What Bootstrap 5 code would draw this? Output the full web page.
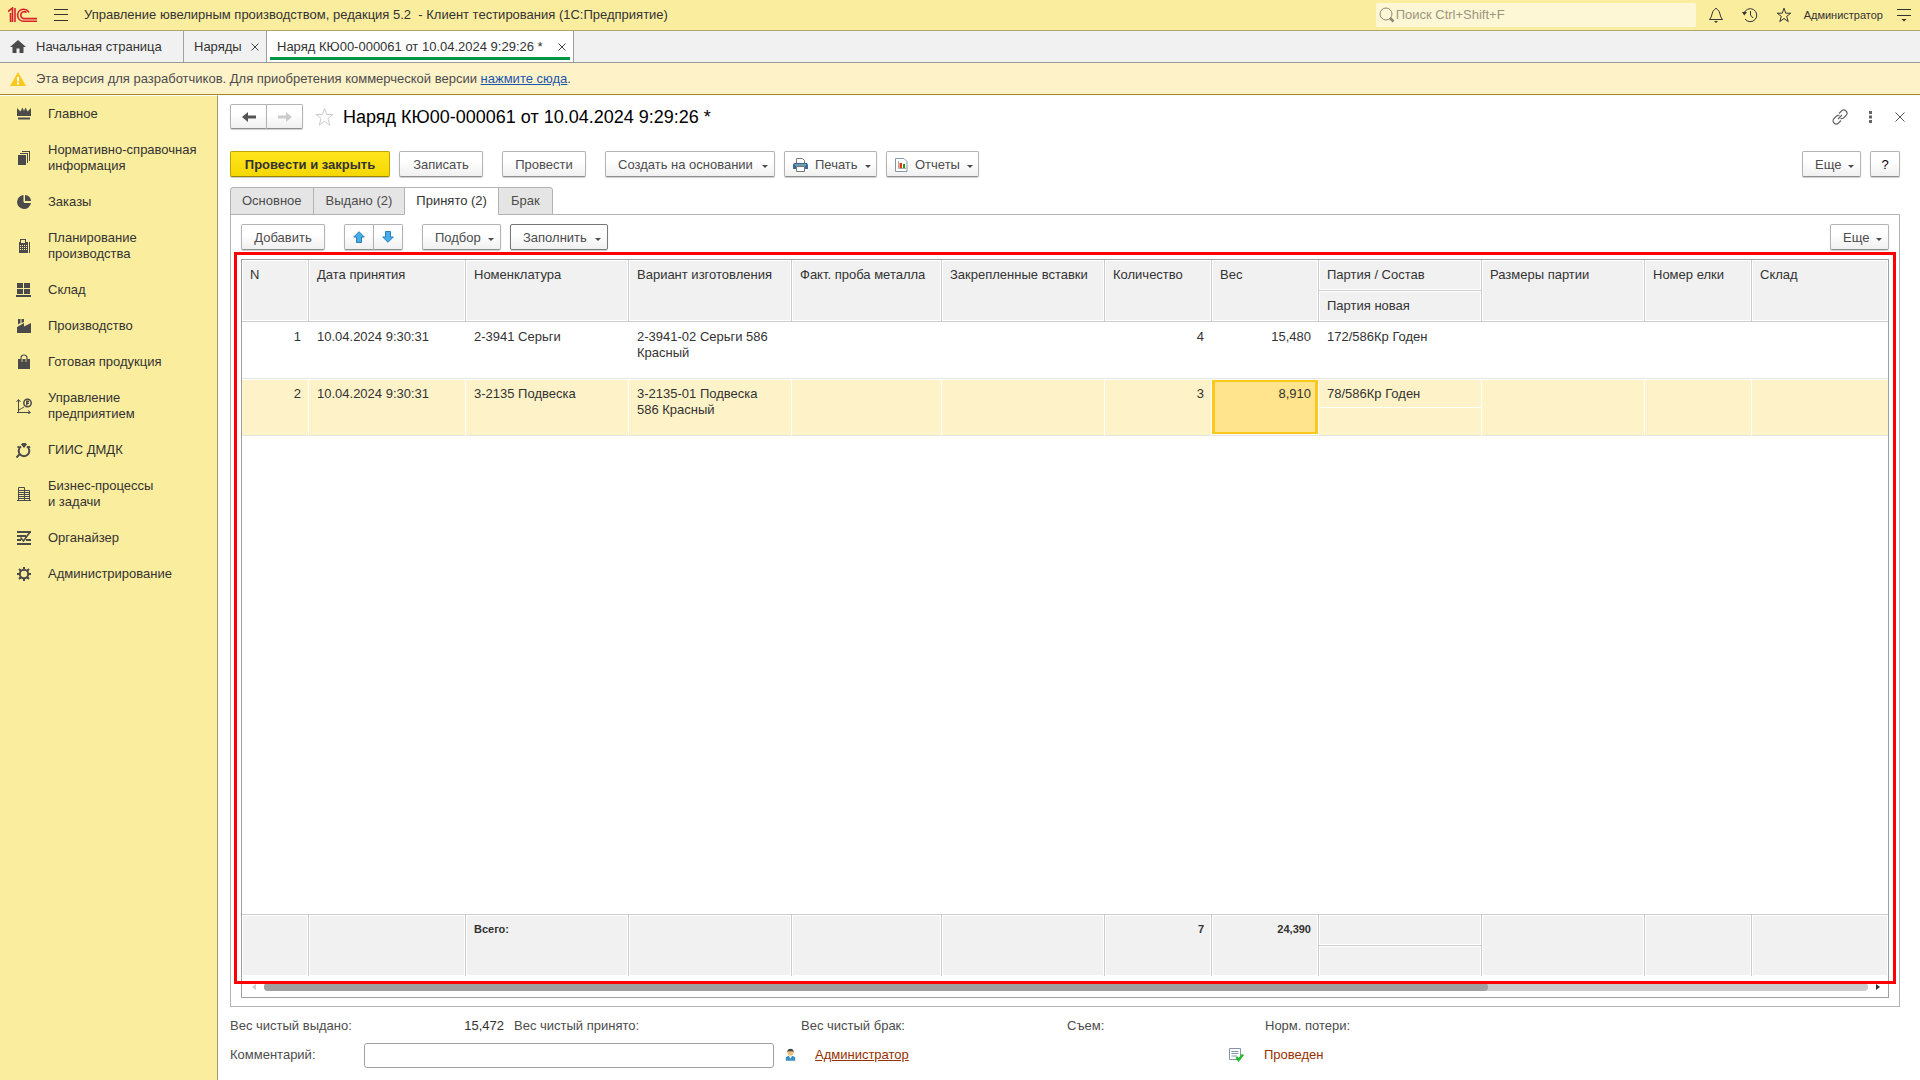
<!DOCTYPE html>
<html lang="ru">
<head>
<meta charset="utf-8">
<meta name="viewport" content="width=device-width, initial-scale=1">
<title>Управление ювелирным производством, редакция 5.2</title>
<link rel="stylesheet" href="https://cdn.jsdelivr.net/npm/bootstrap@5.3.0/dist/css/bootstrap.min.css">
<style>
  body { font-family: "Liberation Sans", Arial, sans-serif; font-size: 13px; line-height: 16px; color: #333; background: #fff; }
  button, input { font: inherit; color: inherit; }
  svg { display: block; flex: none; }
  .bare { border: 0; background: none; padding: 0; display: flex; align-items: center; justify-content: center; }
  .body-area, .work { min-height: 0; min-width: 0; }

  .topbar { height: 31px; background: #fbed9e; border-bottom: 1px solid #aea66f; padding: 0 9px 0 8px; }
  .search-box { width: 320px; height: 24px; background: #fef7d6; border-radius: 2px; padding-left: 3px; color: #8d8873; }
  .search-box input { border: 0; background: none; outline: 0; padding: 0; min-width: 0; }
  .search-box input::placeholder { color: #9b967c; opacity: 1; }
  .top-icons { gap: 18px; margin: 0 12px; }
  .user-name { font-size: 11px; color: #333; text-decoration: none; margin-right: 14px; }

  .window-tabs { height: 32px; background: #f1f1f1; border-bottom: 1px solid #999; }
  .window-tab { height: 31px; border-right: 1px solid #a0a0a0; padding: 0 7px 0 10px; color: #333; }
  .window-tab a { color: inherit; text-decoration: none; }
  .tab-home { width: 184px; gap: 10px; }
  .tab-list { width: 83px; }
  .tab-doc { width: 307px; background: #fff; padding: 0 3px; }
  .tab-doc > div { border-bottom: 3px solid #009646; height: 29px; padding: 5px 4px 0 7px; }

  .notice { height: 32px; background: #fef2c8; border-bottom: 1px solid #a18a20; padding-left: 10px; gap: 10px; color: #4c4c4c; }
  .notice a { color: #1c55ae; }

  .sidebar { width: 218px; background: #fbed9e; border-right: 1px solid #9f9769; border-top: 1px solid #fff; }
  .sidebar a { display: flex; align-items: center; color: #333; text-decoration: none; padding: 10px 0 10px 16px; gap: 16px; }
  .sidebar svg { fill: #4a4a4a; stroke: none; }
  .sidebar .ln { fill: none; stroke: #4a4a4a; }

  .work { padding: 9px 20px 0 12px; }
  .doc-star { margin: 0 9px 0 12px; }
  .doc-title { font-size: 18px; line-height: 24px; color: #000; margin: 0; font-weight: 400; }
  .doc-tools { gap: 10px; margin-right: -10px; }
  .doc-tools .bare { width: 20px; height: 20px; }
  .command-row { margin-top: 22px; gap: 9px; }
  .tool-row { gap: 9px; }
  .spaced { margin-left: 10px; }
  .cmd { height: 26px; display: inline-flex; align-items: center; justify-content: center; border: 1px solid #b3b3b3; border-bottom-color: #8f8f8f; border-radius: 2px; background: linear-gradient(#fff 40%, #f0f0f0); box-shadow: 0 1px 1px #ccc; color: #4c4c4c; padding: 1px 12px 0; white-space: nowrap; }
  .cmd-main { background: linear-gradient(#ffe51e, #f5d700); border-color: #bfa300; border-bottom-color: #998300; color: #333; font-weight: 700; width: 160px; }
  .cmd-drop { justify-content: flex-start; padding: 1px 6px 0 12px; gap: 7px; }
  .cmd-icon { padding-left: 8px; }
  .cmd-drop::after { content: ""; border: 3px solid transparent; border-top-color: #4c4c4c; border-bottom: 0; margin: 3px 0 0 auto; }
  .cmd-focus { border-color: #777; }
  .cmd-nav { height: 25px; width: 37px; padding: 0; }
  .cmd-arrow { width: 30px; padding: 0; }
  .cmd-more { width: 59px; gap: 0; }
  .cmd-help { width: 30px; color: #000; }
  .w-a { width: 84px; }
  .w-b { width: 170px; }
  .w-c { width: 93px; }
  .w-d { width: 79px; }
  .w-e { width: 98px; }
  .joined .cmd:first-child { border-radius: 2px 0 0 2px; }
  .joined .cmd:last-child { border-radius: 0 2px 2px 0; margin-left: -1px; }

  .page-tabs { margin: 10px 0 -1px; position: relative; }
  .page-tab { height: 28px; border: 1px solid #b3b3b3; background: #e5e5e5; padding: 0 12px; margin-right: -1px; color: #4c4c4c; }
  .page-tab:first-child { border-radius: 3px 0 0 0; padding: 0 11px; }
  .page-tab:last-child { border-radius: 0 3px 0 0; }
  .page-tab.current { background: #fff; border-bottom-color: #fff; color: #333; padding: 0 11px; }

  .page-panel { border: 1px solid #b3b3b3; padding: 9px 10px 8px; min-height: 0; }
  .grid-box { border: 1px solid #a0a0a0; min-height: 0; position: relative; margin-top: 9px; }
  .red-frame { position: absolute; inset: -8px -8px 13px -8px; border: 3px solid #f00; pointer-events: none; }
  .grid-area { display: grid; min-height: 0; }
  .goods { table-layout: fixed; width: 100%; height: 100%; border-collapse: separate; border-spacing: 0; }
  .goods th, .goods td { padding: 7px 7px 0 8px; vertical-align: top; font-weight: 400; overflow: hidden; }
  .goods thead th, .goods tfoot td { background: #f1f1f1; border-right: 1px solid #ccc; box-shadow: inset 0 0 0 1px #fff; }
  .goods thead tr, .goods tfoot tr { height: 31px; }
  .goods thead th { border-bottom: 1px solid #ccc; white-space: nowrap; }
  .goods tfoot td { border-top: 1px solid #ccc; font-size: 11px; font-weight: 700; padding-top: 6px; }
  .goods .item-row { height: 29px; }
  .goods .item-sub { height: 28px; }
  .goods .item-row td, .goods .item-sub td { border-bottom: 1px solid #e5e5e5; border-right: 1px solid #fff; }
  .goods .item-row .upper { border-bottom: 1px solid #fff; }
  .goods tr > .edge { border-right: 0; }
  .goods .picked td { background: #fef2c8; box-shadow: inset 0 1px #fff; }
  .goods .picked.item-sub td { box-shadow: none; }
  .goods .picked td.active-cell { background: #ffe48d; box-shadow: inset 0 1px #fff, inset 0 -1px #fff, inset 0 0 0 3px #fbc91b; }
  .scroll-line { height: 21px; padding: 0 8px 0 10px; }
  .scroll-track { height: 8px; background: #ccc; border-radius: 4px; }
  .scroll-thumb { height: 8px; background: #a0a0a0; border-radius: 4px; }

  .totals { display: grid; grid-template-columns: 134px 140px 10px 287px 266px 198px 1fr; height: 16px; margin-top: 11px; color: #4c4c4c; }
  .totals output { color: #333; text-align: right; }
  .bottom-row { height: 26px; margin: 8px 0 12px; color: #4c4c4c; }
  .comment-label { width: 134px; }
  .comment-box { width: 410px; height: 25px; border: 1px solid #a0a0a0; border-radius: 3px; padding: 0 6px; }
  .brown { color: #963100; }
  .author { width: 413px; }
  .state { gap: 20px; }
</style>
<script src="https://cdn.jsdelivr.net/npm/bootstrap@5.3.0/dist/js/bootstrap.bundle.min.js"></script>
</head>
<body class="d-flex flex-column vh-100 overflow-hidden">

<header class="topbar d-flex align-items-center flex-shrink-0">
  <svg width="30" height="16" viewBox="0 0 30 16" fill="none" stroke="#d8232a" stroke-width="1.6"><path d="M0 4.500 4.500 1V15M2.500 6V15M7 15V1"/><path d="M21 5.500A6 6 0 1 0 15.500 14.200H29M18.500 5.500A3.500 3.500 0 1 0 15.500 11.600H29"/></svg>
  <button class="bare ms-3" type="button" aria-label="Меню"><svg width="14" height="12" stroke="#333" stroke-width="1"><path d="M0 .5H14M0 5.500H14M0 11.500H14"/></svg></button>
  <div class="ms-3 flex-grow-1 text-nowrap">Управление ювелирным производством, редакция 5.2 &nbsp;- Клиент тестирования (1С:Предприятие)</div>
  <label class="search-box d-flex align-items-center">
    <svg width="17" height="16" viewBox="0 0 17 16" fill="none" stroke="#8d8873"><circle cx="7" cy="7" r="6"/><path d="m11 11 3.500 3.500" stroke-width="2.500"/></svg>
    <input type="text" class="flex-grow-1" placeholder="Поиск Ctrl+Shift+F" aria-label="Поиск">
  </label>
  <div class="top-icons d-flex align-items-center">
    <button class="bare" type="button" aria-label="Оповещения"><svg width="16" height="16" viewBox="0 0 16 16" fill="none" stroke="#333"><path d="M1.500 12.500H14.500C11.500 10 12.500 4 9.500 2.500Q8 0 6.500 2.500C3.500 4 4.500 10 1.500 12.500Z"/><path d="M6 14H10L8 16Z" fill="#333" stroke="none"/></svg></button>
    <button class="bare" type="button" aria-label="История"><svg width="16" height="16" viewBox="0 0 16 16" fill="none" stroke="#333"><path d="M2 6.500A6.500 6.500 0 1 1 3 12M8.500 4V8L11 11"/><path d="M0 5H5L2.300 8.500Z" fill="#333" stroke="none"/></svg></button>
    <button class="bare" type="button" aria-label="Избранное"><svg width="16" height="16" viewBox="0 0 16 16" fill="none" stroke="#333"><path d="m8 1.200 1.700 5h5.100l-4.100 3.200 1.500 5.200L8 11.500l-4.200 3.100 1.500-5.200L1.200 6.200h5.100Z"/></svg></button>
  </div>
  <a class="user-name" href="#">Администратор</a>
  <button class="bare" type="button" aria-label="Настройки"><svg width="14" height="14" viewBox="0 0 14 14"><path d="M0 1.500H14M0 7.500H14" stroke="#333"/><path d="M4.500 11H9.500L7 13.500Z" fill="#333"/></svg></button>
</header>

<nav class="window-tabs d-flex flex-shrink-0" aria-label="Открытые окна">
  <div class="window-tab tab-home d-flex align-items-center"><svg width="16" height="13" viewBox="0 0 16 13" fill="#4a4a4a"><path d="M8 0 0 7H2.500V13H6.500V8.500H9.500V13H13.500V7H16Z"/></svg><a href="#">Начальная страница</a></div>
  <div class="window-tab tab-list d-flex align-items-center justify-content-between"><a href="#">Наряды</a><button class="bare" type="button" aria-label="Закрыть"><svg width="8" height="8" stroke="#444"><path d="m.5.5 7 7m0-7-7 7"/></svg></button></div>
  <div class="window-tab tab-doc"><div class="d-flex align-items-center justify-content-between"><a href="#">Наряд КЮ00-000061 от 10.04.2024 9:29:26 *</a><button class="bare" type="button" aria-label="Закрыть"><svg width="8" height="8" stroke="#444"><path d="m.5.5 7 7m0-7-7 7"/></svg></button></div></div>
</nav>

<div class="notice d-flex align-items-center flex-shrink-0">
  <svg width="16" height="14" viewBox="0 0 16 14"><path d="M8 0 16 14H0Z" fill="#fcc81c"/><path d="M7 5H9V9.500H7ZM7 10.500H9V12.500H7Z" fill="#fff"/></svg>
  <span>Эта версия для разработчиков. Для приобретения коммерческой версии <a href="#">нажмите сюда</a>.</span>
</div>

<div class="body-area d-flex flex-grow-1">
  <nav class="sidebar flex-shrink-0" aria-label="Разделы">
    <a href="#"><svg width="16" height="16"><path d="M1 2 4.500 5.500 6.500 1.500 8 5 9.500 1.500 11.500 5.500 15 2V10H1ZM2 11.500H14V13.500H2Z"/></svg>Главное</a>
    <a href="#"><svg width="16" height="16"><path d="M2 5H10V15H2ZM4 3H12V13H11V4H4ZM6 1H14V11H13V2H6Z"/></svg><span>Нормативно-справочная<br>информация</span></a>
    <a href="#"><svg width="16" height="16"><path d="M7.500 1A7 7 0 1 0 15 9L8.500 9 7.500 8Z"/><path d="M9 1A6 6 0 0 1 15 7H9Z"/></svg>Заказы</a>
    <a href="#"><svg width="16" height="16"><path fill-rule="evenodd" d="M4 1H10V4H12V15H3V4H4ZM5 2V5H9V2ZM4 7V8H5V7ZM6 7V8H7V7ZM8 7V8H9V7ZM10 7V8H11V7ZM4 9V10H5V9ZM6 9V10H7V9ZM8 9V10H9V9ZM10 9V10H11V9ZM4 11V12H5V11ZM6 11V12H7V11ZM8 11V12H9V11ZM10 11V12H11V11ZM13 4H14V15H13Z"/></svg><span>Планирование<br>производства</span></a>
    <a href="#"><svg width="16" height="16"><path d="M1 1H7V6H1ZM8 1H14V6H8ZM1 7H7V12H1ZM8 7H14V12H8ZM0 13H15V15H0Z"/></svg>Склад</a>
    <a href="#"><svg width="16" height="16"><path d="M2 1H4.500V5L2 6.500ZM5.500 1H8V4L5.500 5ZM1 9 8 5V8.500L15 5V15H1Z"/></svg>Производство</a>
    <a href="#"><svg width="16" height="16"><path d="M2 5H14V15H2Z"/><path class="ln" d="M5 8V4Q5 1 8 1T11 4V8" stroke-width="1.200"/><path d="M6 5V8M10 5V8" stroke="#fbed9e" stroke-width=".8"/></svg>Готовая продукция</a>
    <a href="#"><svg width="16" height="16"><path class="ln" d="M2.500 14.500V2M.5 4 2.500 1.500 4.500 4M1 14.500H14M12 12.500 14.500 14.500 12 16M3 12 5.500 10.500 8 9"/><circle class="ln" cx="11.500" cy="5" r="3.700" stroke-width="1.500"/><path d="M10 2.500H13V4H11.500V4.500H13V6H11.500V7.500H10Z"/></svg><span>Управление<br>предприятием</span></a>
    <a href="#"><svg width="16" height="16"><path class="ln" d="M5 4.500A5.300 5.300 0 1 0 11 4.500M4 12 .5 15.500M1.500 4.500 4 6M14 4.500 12 6" stroke-width="2"/><path d="M5 2.500 6.500 1H9.500L11 2.500 8 6Z"/></svg>ГИИС ДМДК</a>
    <a href="#"><svg width="16" height="16"><path class="ln" d="M2.500 15V1.500H8.500V15M9 4.500H13.500V15M1 14.500H15M3 4.500H8M3 6.500H8M3 8.500H8M3 10.500H8M3 12.500H8M9 6.500H13M9 8.500H13M9 10.500H13M9 12.500H13"/></svg><span>Бизнес-процессы<br>и задачи</span></a>
    <a href="#"><svg width="16" height="16"><path class="ln" d="M1 2H15M1 6H10M1 10H5M10 10H15M1 14H15" stroke-width="2"/><path class="ln" d="M4.500 7.500 7.500 11 14 2" stroke-width="1.600"/></svg>Органайзер</a>
    <a href="#"><svg width="16" height="16"><circle class="ln" cx="8" cy="8" r="4.200" stroke-width="2"/><path class="ln" stroke-width="2" d="M8 1V4M8 12V15M1 8H4M12 8H15M3 3 5 5M11 11 13 13M13 3 11 5M5 11 3 13"/></svg>Администрирование</a>
  </nav>

  <main class="work d-flex flex-column flex-grow-1">
    <div class="d-flex align-items-center flex-shrink-0">
      <div class="joined d-flex">
        <button class="cmd cmd-nav" type="button" aria-label="Назад"><svg width="14" height="10" fill="#555"><path d="M0 5 6 0V3.500H14V6.500H6V10Z"/></svg></button>
        <button class="cmd cmd-nav" type="button" aria-label="Вперед"><svg width="14" height="10" fill="#ccc"><path d="M14 5 8 0V3.500H0V6.500H8V10Z"/></svg></button>
      </div>
      <button class="bare doc-star" type="button" aria-label="В избранное"><svg width="19" height="20" viewBox="0 0 19 20" fill="none" stroke="#ccc"><path d="m9.500 1.500 2.200 6h6.300l-5 4 1.800 6.700-5.300-4-5.300 4L6 11.500 1 7.500h6.300Z"/></svg></button>
      <h1 class="doc-title flex-grow-1">Наряд КЮ00-000061 от 10.04.2024 9:29:26 *</h1>
      <div class="doc-tools d-flex align-items-center">
        <button class="bare" type="button" aria-label="Ссылка"><svg width="16" height="16" viewBox="0 0 16 16" fill="none" stroke="#666" stroke-width="1.200"><path d="M7 4.500 9.500 2A3 3 0 0 1 14 6.500L11.500 9Q10 10 8.500 9.500M9 11.500 6.500 14A3 3 0 0 1 2 9.500L4.500 7Q6 6 7.500 6.500M6 10 10 6"/></svg></button>
        <button class="bare" type="button" aria-label="Еще действия"><svg width="3" height="12" fill="#666"><path d="M0 0H3V3H0ZM0 4.500H3V7.500H0ZM0 9H3V12H0Z"/></svg></button>
        <button class="bare" type="button" aria-label="Закрыть"><svg width="10" height="10" stroke="#555"><path d="m.5.5 9 9m0-9-9 9"/></svg></button>
      </div>
    </div>

    <div class="command-row d-flex flex-shrink-0">
      <button class="cmd cmd-main" type="button">Провести и закрыть</button>
      <button class="cmd w-a" type="button">Записать</button>
      <button class="cmd w-a spaced" type="button">Провести</button>
      <button class="cmd cmd-drop w-b spaced" type="button">Создать на основании</button>
      <button class="cmd cmd-drop cmd-icon w-c" type="button"><svg width="15" height="14" viewBox="0 0 15 14"><path d="M3.500 5V.5H9.500L11.500 2.500V5" fill="#fff" stroke="#777"/><path d="M1 5H14L15 7V11H0V7Z" fill="#3d6a94"/><path d="M2 7H13" stroke="#9cc"/><path d="M3.500 8.500H11.500V13.500H3.500Z" fill="#fff" stroke="#777"/></svg>Печать</button>
      <button class="cmd cmd-drop cmd-icon w-c" type="button"><svg width="13" height="14" viewBox="0 0 13 14"><path d="M.5.5H9L12 3.500V13.500H.5Z" fill="#fff" stroke="#8497a8"/><path d="M3.500 3V10.500H11" fill="none" stroke="#aaa"/><path d="M4.500 5H7V10H4.500Z" fill="#e31"/><path d="M8 6H10V10H8Z" fill="#292"/></svg>Отчеты</button>
      <button class="cmd cmd-drop cmd-more ms-auto" type="button">Еще</button>
      <button class="cmd cmd-help" type="button">?</button>
    </div>

    <div class="page-tabs d-flex flex-shrink-0" role="tablist">
      <button class="page-tab" role="tab" type="button">Основное</button>
      <button class="page-tab" role="tab" type="button">Выдано (2)</button>
      <button class="page-tab current" role="tab" type="button" aria-selected="true">Принято (2)</button>
      <button class="page-tab" role="tab" type="button">Брак</button>
    </div>

    <section class="page-panel d-flex flex-column flex-grow-1">
      <div class="tool-row d-flex flex-shrink-0">
        <button class="cmd w-a" type="button">Добавить</button>
        <div class="joined d-flex spaced">
          <button class="cmd cmd-arrow" type="button" aria-label="Вверх"><svg width="12" height="12" fill="#45aeea" stroke="#2c7fb8"><path d="M6 .7 11.300 6H8.500V11.500H3.500V6H.7Z"/></svg></button>
          <button class="cmd cmd-arrow" type="button" aria-label="Вниз"><svg width="12" height="12" fill="#45aeea" stroke="#2c7fb8"><path d="M6 11.300 .7 6H3.500V.5H8.500V6H11.300Z"/></svg></button>
        </div>
        <button class="cmd cmd-drop w-d spaced" type="button">Подбор</button>
        <button class="cmd cmd-drop cmd-focus w-e" type="button">Заполнить</button>
        <button class="cmd cmd-drop cmd-more ms-auto" type="button">Еще</button>
      </div>

      <div class="grid-box d-flex flex-column flex-grow-1">
        <div class="grid-area flex-grow-1">
          <table class="goods">
            <colgroup><col style="width:67px"><col style="width:157px"><col style="width:163px"><col style="width:163px"><col style="width:150px"><col style="width:163px"><col style="width:107px"><col style="width:107px"><col style="width:163px"><col style="width:163px"><col style="width:107px"><col></colgroup>
            <thead>
              <tr><th rowspan="2">N</th><th rowspan="2">Дата принятия</th><th rowspan="2">Номенклатура</th><th rowspan="2">Вариант изготовления</th><th rowspan="2">Факт. проба металла</th><th rowspan="2">Закрепленные вставки</th><th rowspan="2">Количество</th><th rowspan="2">Вес</th><th>Партия / Состав</th><th rowspan="2">Размеры партии</th><th rowspan="2">Номер елки</th><th rowspan="2" class="edge">Склад</th></tr>
              <tr><th>Партия новая</th></tr>
            </thead>
            <tbody>
              <tr class="item-row"><td rowspan="2" class="text-end">1</td><td rowspan="2">10.04.2024 9:30:31</td><td rowspan="2">2-3941 Серьги</td><td rowspan="2">2-3941-02 Серьги 586 Красный</td><td rowspan="2"></td><td rowspan="2"></td><td rowspan="2" class="text-end">4</td><td rowspan="2" class="text-end">15,480</td><td class="upper">172/586Кр Годен</td><td rowspan="2"></td><td rowspan="2"></td><td rowspan="2" class="edge"></td></tr>
              <tr class="item-sub"><td></td></tr>
              <tr class="item-row picked"><td rowspan="2" class="text-end">2</td><td rowspan="2">10.04.2024 9:30:31</td><td rowspan="2">3-2135 Подвеска</td><td rowspan="2">3-2135-01 Подвеска 586&nbsp;Красный</td><td rowspan="2"></td><td rowspan="2"></td><td rowspan="2" class="text-end">3</td><td rowspan="2" class="text-end active-cell">8,910</td><td class="upper">78/586Кр Годен</td><td rowspan="2"></td><td rowspan="2"></td><td rowspan="2" class="edge"></td></tr>
              <tr class="item-sub picked"><td></td></tr>
              <tr><td colspan="12"></td></tr>
            </tbody>
            <tfoot>
              <tr><td rowspan="2"></td><td rowspan="2"></td><td rowspan="2">Всего:</td><td rowspan="2"></td><td rowspan="2"></td><td rowspan="2"></td><td rowspan="2" class="text-end">7</td><td rowspan="2" class="text-end">24,390</td><td></td><td rowspan="2"></td><td rowspan="2"></td><td rowspan="2" class="edge"></td></tr>
              <tr><td></td></tr>
            </tfoot>
          </table>
        </div>
        <div class="scroll-line d-flex align-items-center flex-shrink-0">
          <svg width="4" height="6" fill="#ccc"><path d="M4 0V6L0 3Z"/></svg>
          <div class="scroll-track flex-grow-1 ms-2 me-2"><div class="scroll-thumb" style="width:76.300%"></div></div>
          <svg width="4" height="6" fill="#333"><path d="M0 0V6L4 3Z"/></svg>
        </div>
        <div class="red-frame"></div>
      </div>
    </section>

    <div class="totals flex-shrink-0">
      <span>Вес чистый выдано:</span><output>15,472</output><span></span><span>Вес чистый принято:</span><span>Вес чистый брак:</span><span>Съем:</span><span>Норм. потери:</span>
    </div>
    <div class="bottom-row d-flex align-items-center flex-shrink-0">
      <label class="comment-label" for="comment">Комментарий:</label>
      <input class="comment-box" id="comment" type="text">
      <svg class="ms-2 me-3" width="17" height="14" viewBox="0 0 18 14"><path d="M4 13V9.500L6.500 8H11.500L14 9.500V13Z" fill="#3c8fc4"/><path d="M7.500 8 9 11 10.500 8Z" fill="#fff"/><circle cx="9" cy="4.500" r="3.200" fill="#edbd78"/><path d="M5.500 4Q6 .5 9 .5T12.500 4L11 3H7Z" fill="#444"/></svg>
      <a class="brown author" href="#">Администратор</a>
      <div class="state d-flex align-items-center">
        <svg width="16" height="14" viewBox="0 0 16 14"><path d="M1.500.5H12.500V11.500H1.500Z" fill="#fff" stroke="#8497a8"/><path d="M3.500 3.500H10.500M3.500 5.500H10.500M3.500 8H9" stroke="#8497a8"/><path d="m8.500 9 2 3L15 6.500" stroke="#2b3" stroke-width="2.500" fill="none"/></svg>
        <span class="brown">Проведен</span>
      </div>
    </div>
  </main>
</div>
</body>
</html>
